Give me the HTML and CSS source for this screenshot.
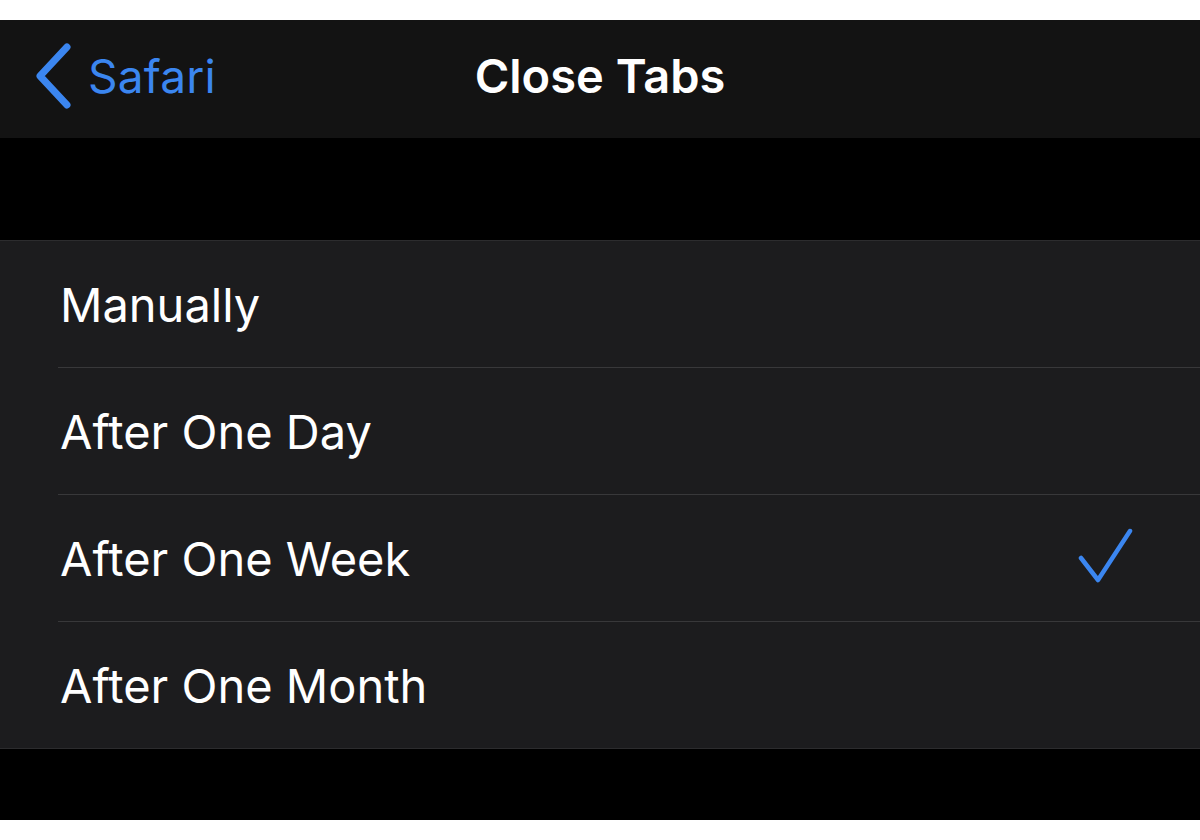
FILE: index.html
```html
<!DOCTYPE html>
<html>
<head>
  <meta charset="UTF-8">
  <title>Close Tabs</title>
  <link rel="stylesheet" href="styles.css">
</head>
<body>
  <div class="screen">
    <div class="nav-bar">
      <div class="back">
        <svg class="chevron" width="40" height="66" viewBox="0 0 40 66">
          <polyline points="33,4 6,33 33,62" fill="none" stroke="#3b86f0" stroke-width="7" stroke-linecap="round" stroke-linejoin="round"/>
        </svg>
        <span class="back-label">Safari</span>
      </div>
      <h1 class="title">Close Tabs</h1>
      <div></div>
    </div>

    <div class="section-gap"></div>

    <div class="list">
      <div class="row"><div class="row-inner"><span class="row-label">Manually</span></div></div>
      <div class="row"><div class="row-inner"><span class="row-label">After One Day</span></div></div>
      <div class="row">
        <div class="row-inner">
          <span class="row-label">After One Week</span>
          <svg class="check" width="58" height="60" viewBox="0 0 58 60">
            <polyline points="5,30 22,52 54,3" fill="none" stroke="#3b86f0" stroke-width="4.5" stroke-linecap="round" stroke-linejoin="round"/>
          </svg>
        </div>
      </div>
      <div class="row"><div class="row-inner"><span class="row-label">After One Month</span></div></div>
    </div>

    <div class="bottom-gap"></div>
  </div>
</body>
</html>
```

FILE: styles.css
```css
:root {
  --blue: #3b86f0;
  --nav-bg: #131313;
  --cell-bg: #1c1c1e;
  --separator: #38383a;
  --text: #ffffff;
}

body {
  margin: 0;
  padding: 20px 0;
  background-color: #ffffff;
  font-family: Inter, "Open Sans", "Liberation Sans", sans-serif;
  color: var(--text);
}

.screen {
  background-color: #000000;
}

.nav-bar {
  display: grid;
  grid-template-columns: 1fr auto 1fr;
  align-items: center;
  box-sizing: border-box;
  height: 118px;
  padding-bottom: 7px;
  background-color: var(--nav-bg);
}

.back {
  display: flex;
  align-items: center;
  padding-left: 34px;
  color: var(--blue);
}

.chevron {
  display: block;
  margin-right: 14px;
}

.back-label {
  font-size: 46px;
  letter-spacing: 0.2px;
}

.title {
  margin: 0;
  font-size: 47px;
  font-weight: 600;
}

.section-gap {
  height: 102px;
}

.list {
  background-color: var(--cell-bg);
  border-top: 1px solid #2c2c2e;
  border-bottom: 1px solid #2c2c2e;
}

.row {
  padding-left: 58px;
}

.row-inner {
  display: flex;
  align-items: center;
  justify-content: space-between;
  height: 126px;
  padding-left: 2px;
  padding-right: 66px;
  border-bottom: 1px solid var(--separator);
}

.row:last-child .row-inner {
  border-bottom: none;
}

.row-label {
  font-size: 47px;
  font-weight: 400;
}

.check {
  display: block;
}

.bottom-gap {
  height: 71px;
}
```
